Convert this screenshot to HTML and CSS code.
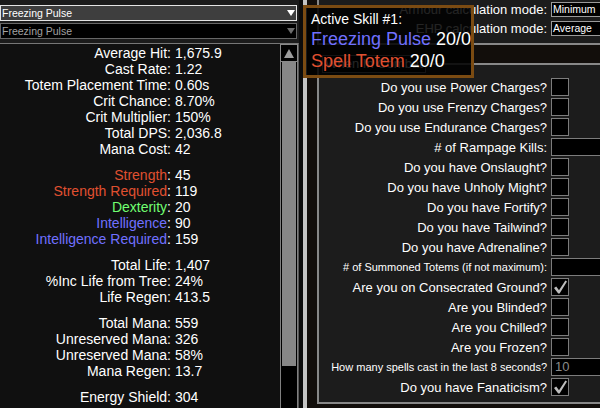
FILE: index.html
```html
<!DOCTYPE html>
<html lang="en">
<head>
    <meta charset="UTF-8">
    <title>Calcs</title>
    <link rel="stylesheet" href="styles.css">
</head>
<body>
    <div class="app">
        <div class="left">
            <div class="dropdown main">
                <span>Freezing Pulse</span>
                <span class="arrow"></span>
            </div>
            <div class="dropdown sub">
                <span>Freezing Pulse</span>
                <span class="arrow"></span>
            </div>

            <div class="stats-box">
                <div class="stats">
                    <div class="group">
                        <div class="stat"><span class="label">Average Hit:</span><span class="value">1,675.9</span></div>
                        <div class="stat"><span class="label">Cast Rate:</span><span class="value">1.22</span></div>
                        <div class="stat"><span class="label">Totem Placement Time:</span><span class="value">0.60s</span></div>
                        <div class="stat"><span class="label">Crit Chance:</span><span class="value">8.70%</span></div>
                        <div class="stat"><span class="label">Crit Multiplier:</span><span class="value">150%</span></div>
                        <div class="stat"><span class="label">Total DPS:</span><span class="value">2,036.8</span></div>
                        <div class="stat"><span class="label">Mana Cost:</span><span class="value">42</span></div>
                    </div>
                    <div class="group">
                        <div class="stat"><span class="label"><span class="str">Strength</span>:</span><span class="value">45</span></div>
                        <div class="stat"><span class="label"><span class="str">Strength Required</span>:</span><span class="value">119</span></div>
                        <div class="stat"><span class="label"><span class="dex">Dexterity</span>:</span><span class="value">20</span></div>
                        <div class="stat"><span class="label"><span class="int">Intelligence</span>:</span><span class="value">90</span></div>
                        <div class="stat"><span class="label"><span class="int">Intelligence Required</span>:</span><span class="value">159</span></div>
                    </div>
                    <div class="group">
                        <div class="stat"><span class="label">Total Life:</span><span class="value">1,407</span></div>
                        <div class="stat"><span class="label">%Inc Life from Tree:</span><span class="value">24%</span></div>
                        <div class="stat"><span class="label">Life Regen:</span><span class="value">413.5</span></div>
                    </div>
                    <div class="group">
                        <div class="stat"><span class="label">Total Mana:</span><span class="value">559</span></div>
                        <div class="stat"><span class="label">Unreserved Mana:</span><span class="value">326</span></div>
                        <div class="stat"><span class="label">Unreserved Mana:</span><span class="value">58%</span></div>
                        <div class="stat"><span class="label">Mana Regen:</span><span class="value">13.7</span></div>
                    </div>
                    <div class="group">
                        <div class="stat"><span class="label">Energy Shield:</span><span class="value">304</span></div>
                    </div>
                </div>
                <div class="scrollbar">
                    <div class="scroll-up"><span class="up-arrow"></span></div>
                    <div class="track"><div class="thumb"></div></div>
                </div>
            </div>
        </div>

        <div class="gutter"></div>
        <div class="splitter"></div>

        <div class="right">
            <div class="section top">
                <div class="option"><span class="label">Armour calculation mode:</span><div class="select">Minimum</div></div>
                <div class="option"><span class="label">EHP calculation mode:</span><div class="select">Average</div></div>
            </div>

            <div class="section combat">
                <div class="section-title">When In Combat</div>
                <div class="option"><span class="label">Do you use Power Charges?</span><div class="check"></div></div>
                <div class="option"><span class="label">Do you use Frenzy Charges?</span><div class="check"></div></div>
                <div class="option"><span class="label">Do you use Endurance Charges?</span><div class="check"></div></div>
                <div class="option"><span class="label"># of Rampage Kills:</span><div class="field"></div></div>
                <div class="option"><span class="label">Do you have Onslaught?</span><div class="check"></div></div>
                <div class="option"><span class="label">Do you have Unholy Might?</span><div class="check"></div></div>
                <div class="option"><span class="label">Do you have Fortify?</span><div class="check"></div></div>
                <div class="option"><span class="label">Do you have Tailwind?</span><div class="check"></div></div>
                <div class="option"><span class="label">Do you have Adrenaline?</span><div class="check"></div></div>
                <div class="option"><span class="label small"># of Summoned Totems (if not maximum):</span><div class="field"></div></div>
                <div class="option"><span class="label">Are you on Consecrated Ground?</span>
                    <div class="check"><svg viewBox="0 0 16 16"><path d="M2 9 L4.2 7.4 L7 11.2 L13.4 1.4 L15 2.6 L7.6 14.6 L6.2 14.6 Z"/></svg></div>
                </div>
                <div class="option"><span class="label">Are you Blinded?</span><div class="check"></div></div>
                <div class="option"><span class="label">Are you Chilled?</span><div class="check"></div></div>
                <div class="option"><span class="label">Are you Frozen?</span><div class="check"></div></div>
                <div class="option"><span class="label small">How many spells cast in the last 8 seconds?</span><div class="field">10</div></div>
                <div class="option"><span class="label">Do you have Fanaticism?</span>
                    <div class="check"><svg viewBox="0 0 16 16"><path d="M2 9 L4.2 7.4 L7 11.2 L13.4 1.4 L15 2.6 L7.6 14.6 L6.2 14.6 Z"/></svg></div>
                </div>
            </div>
        </div>

        <div class="tooltip">
            <div class="tip-head">Active Skill #1:</div>
            <div class="tip-gem"><span class="int">Freezing Pulse</span> 20/0</div>
            <div class="tip-gem"><span class="str">Spell Totem</span> 20/0</div>
        </div>
    </div>
</body>
</html>
```

FILE: styles.css
```css
body {
    margin: 0;
    width: 600px;
    height: 408px;
    overflow: hidden;
    background: #1b1b1b;
    color: #fff;
    font-family: "Liberation Sans", Arial, sans-serif;
}

.app {
    position: relative;
    display: flex;
    height: 408px;
}

/* left column */

.left {
    width: 299px;
    display: flex;
    flex-direction: column;
}

.dropdown {
    width: 297px;
    height: 16px;
    box-sizing: border-box;
    border: 1px solid;
    display: flex;
    align-items: center;
    justify-content: space-between;
    padding: 0 1px 0 1px;
    font-size: 10.5px;
    white-space: nowrap;
}

.dropdown.main {
    margin-top: 5px;
    background: #3e3e3e;
    border-color: #e4e4e4;
    color: #fff;
}

.dropdown.sub {
    margin-top: 2px;
    background: #000;
    border-color: #666;
    color: #a2a2a2;
}

.arrow {
    width: 0;
    height: 0;
    border-left: 4px solid transparent;
    border-right: 4px solid transparent;
    border-top: 6px solid #fff;
}

.dropdown.sub .arrow {
    border-top-color: #6c6c6c;
}

.stats-box {
    flex: 1;
    margin-top: 4px;
    display: flex;
    background: #101010;
    border-top: 1px solid #777;
    border-right: 1px solid #555;
}

.stats {
    width: 280px;
    padding-top: 1px;
}

.group + .group {
    margin-top: 10px;
}

.stat {
    display: grid;
    grid-template-columns: 171px 1fr;
    height: 16px;
    line-height: 16px;
    font-size: 14px;
    white-space: nowrap;
}

.stat .label {
    text-align: right;
}

.stat .value {
    padding-left: 4px;
}

.str { color: #e05030; }
.dex { color: #70ff70; }
.int { color: #7070ff; }

.scrollbar {
    width: 18px;
    display: flex;
    flex-direction: column;
}

.scroll-up {
    height: 18px;
    box-sizing: border-box;
    border: 1px solid #888;
    background: #000;
    display: flex;
    align-items: center;
    justify-content: center;
}

.up-arrow {
    width: 0;
    height: 0;
    border-left: 5px solid transparent;
    border-right: 5px solid transparent;
    border-bottom: 9px solid #9c9c9c;
}

.track {
    flex: 1;
    background: #000;
    border-left: 1px solid #808080;
    border-right: 1px solid #808080;
}

.thumb {
    height: 304px;
    margin: 0 1px;
    background: #878787;
}

.gutter {
    width: 4px;
    background: #0c0c0c;
}

.splitter {
    width: 4px;
    background: #c4c4c4;
}

/* right column */

.right {
    flex: 1;
    background: #120e0b;
    padding-left: 10px;
    overflow: hidden;
}

.section {
    position: relative;
    width: 420px;
    background: #1c1c1c;
    border: 2px solid #888;
}

.section.top {
    border-top: none;
    padding: 2px 0 7px;
}

.section.top .option {
    height: 15px;
}

.section.top .option + .option {
    margin-top: 4px;
}

.section.combat {
    margin-top: 18px;
    padding: 13px 0 6px;
}

.section.combat .option {
    height: 18px;
}

.section.combat .option + .option {
    margin-top: 2px;
}

.section-title {
    position: absolute;
    left: 3px;
    top: -10px;
    width: 104px;
    height: 18px;
    box-sizing: border-box;
    border: 1px solid #888;
    background: #000;
    font-size: 13px;
    line-height: 16px;
    text-align: center;
}

.option {
    display: flex;
    align-items: center;
    gap: 4px;
}

.option .label {
    width: 228px;
    text-align: right;
    font-size: 13px;
    white-space: nowrap;
}

.option .label.small {
    font-size: 11px;
}

.select {
    width: 80px;
    height: 15px;
    box-sizing: border-box;
    border: 1px solid #9a9a9a;
    background: #000;
    padding-left: 1px;
    font-size: 10.5px;
    line-height: 13px;
}

.check {
    width: 18px;
    height: 18px;
    box-sizing: border-box;
    border: 1px solid #7c7c7c;
    background: #000;
}

.check svg {
    display: block;
    width: 16px;
    height: 16px;
    fill: #bdbdbd;
}

.field {
    width: 80px;
    height: 18px;
    box-sizing: border-box;
    border: 1px solid #7c7c7c;
    background: #000;
    padding-left: 3px;
    color: #8a8a8a;
    font-size: 13px;
    line-height: 16px;
}

/* hover tooltip */

.tooltip {
    position: absolute;
    left: 303px;
    top: 5px;
    width: 171px;
    height: 73px;
    box-sizing: border-box;
    border: 3px solid #7b4b12;
    background: rgba(0, 0, 0, 0.86);
    padding: 2.5px 0 0 5px;
    white-space: nowrap;
}

.tip-head {
    font-size: 14px;
    line-height: 17px;
}

.tip-gem {
    font-size: 18px;
    line-height: 22px;
}
```
